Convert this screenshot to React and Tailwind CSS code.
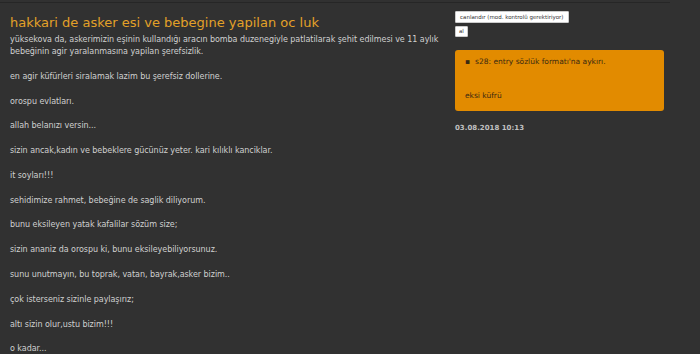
export default function App() {
  const paras = [
    "yüksekova da, askerimizin eşinin kullandığı aracın bomba duzenegiyle patlatilarak şehit edilmesi ve 11 aylık bebeğinin agir yaralanmasına yapilan şerefsizlik.",
    "en agir küfürleri siralamak lazim bu şerefsiz dollerine.",
    "orospu evlatları.",
    "allah belanızı versin...",
    "sizin ancak,kadın ve bebeklere gücünüz yeter. kari kılıklı kanciklar.",
    "it soyları!!!",
    "sehidimize rahmet, bebeğine de saglik diliyorum.",
    "bunu eksileyen yatak kafalilar sözüm size;",
    "sizin ananiz da orospu ki, bunu eksileyebiliyorsunuz.",
    "sunu unutmayın, bu toprak, vatan, bayrak,asker bizim..",
    "çok isterseniz sizinle paylaşırız;",
    "altı sizin olur,ustu bizim!!!",
    "o kadar...",
  ];
  return (
    <div className="w-[700px] h-[354px] overflow-hidden bg-[#313131] font-['DejaVu_Sans',sans-serif]">
      <div className="h-[3px] w-[670px] border-b border-[#262626]"></div>
      <div className="flex pl-[10px] pt-[10px]">
        <div className="w-[445px]">
          <h1 className="text-[13px] leading-[20px] text-[#e3a128] font-normal">
            hakkari de asker esi ve bebegine yapilan oc luk
          </h1>
          <div className="mt-[0.5px] text-[8px] leading-[12.4px] text-[#d0d0d0] w-[440px] tracking-[-0.05px]">
            {paras.map((p, i) => (
              <p key={i} className="mb-[12.4px]">{p}</p>
            ))}
          </div>
        </div>
        <div className="w-[209px] -mt-[2px]">
          <div className="flex flex-col items-start gap-[3px]">
            <button className="bg-white text-[#333] text-[5.5px] leading-[8px] px-[4px] py-[1px] rounded-[1px] border border-[#ccc]">
              canlandır (mod. kontrolü gerektiriyor)
            </button>
            <button className="bg-white text-[#333] text-[5.5px] leading-[7px] px-[3px] py-[1px] rounded-[1px] border border-[#ccc]">
              al
            </button>
          </div>
          <div className="mt-[13px] bg-[#e28b00] rounded-[3px] h-[61px] pl-[10px] pt-[7px] text-[7.5px] leading-[10px] text-[#3a2a12]">
            <ul className="list-none">
              <li className="flex gap-[5px]"><span>▪</span><span>s28: entry sözlük formatı'na aykırı.</span></li>
            </ul>
            <div className="mt-[24px]">eksi küfrü</div>
          </div>
          <div className="mt-[12px] text-[7px] font-bold text-[#c0c0c0]">03.08.2018 10:13</div>
        </div>
      </div>
    </div>
  );
}
